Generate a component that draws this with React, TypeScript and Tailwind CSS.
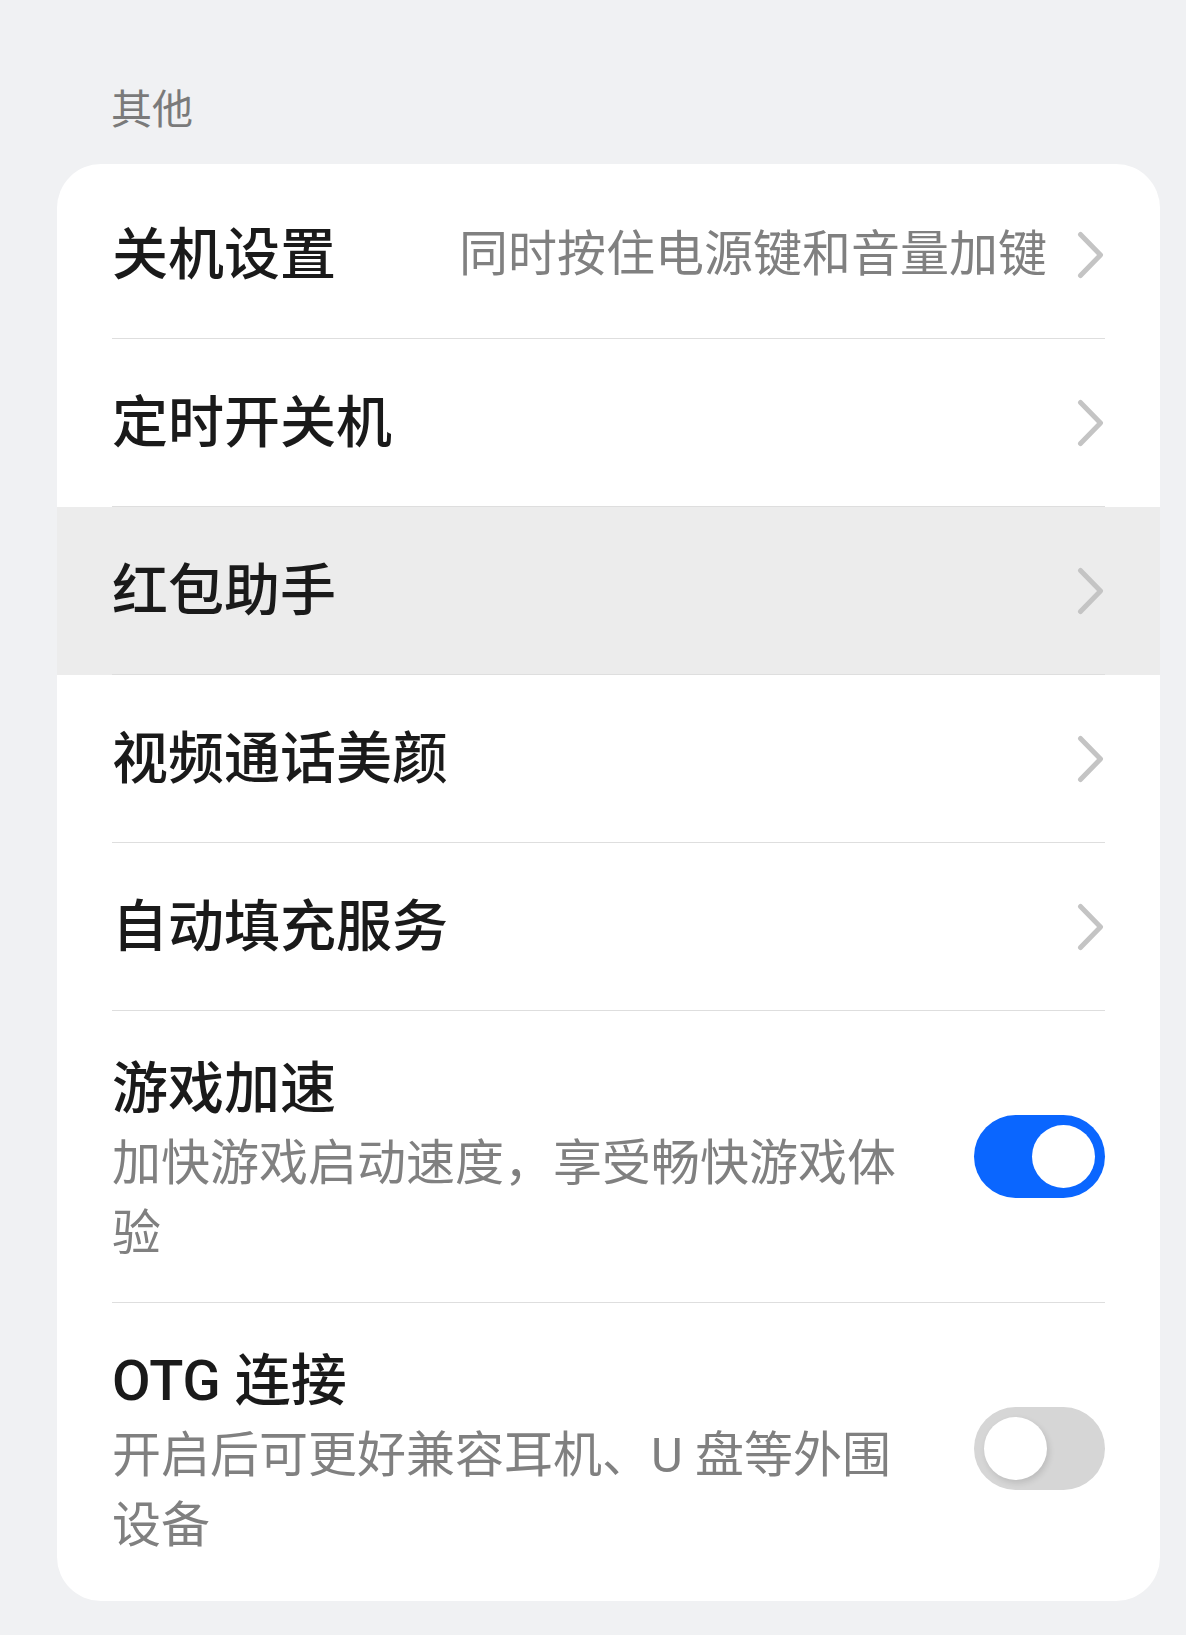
import React from "react";

type Row =
  | { kind: "link"; title: string; value?: string; pressed?: boolean }
  | { kind: "toggle"; title: string; desc: string; on: boolean };

const rows: Row[] = [
  { kind: "link", title: "关机设置", value: "同时按住电源键和音量加键" },
  { kind: "link", title: "定时开关机" },
  { kind: "link", title: "红包助手", pressed: true },
  { kind: "link", title: "视频通话美颜" },
  { kind: "link", title: "自动填充服务" },
  { kind: "toggle", title: "游戏加速", desc: "加快游戏启动速度，享受畅快游戏体验", on: true },
  { kind: "toggle", title: "OTG 连接", desc: "开启后可更好兼容耳机、U 盘等外围设备", on: false },
];

function Chevron() {
  return (
    <svg width="28" height="48" viewBox="0 0 28 48" className="shrink-0">
      <polyline
        points="3.5,3.5 23.5,24 3.5,44.5"
        fill="none"
        stroke="#c4c4c4"
        strokeWidth="5"
        strokeLinecap="round"
        strokeLinejoin="round"
      />
    </svg>
  );
}

function Toggle({ on }: { on: boolean }) {
  return (
    <div
      className={`shrink-0 w-[131px] h-[83px] rounded-full flex items-center px-[10px] ${
        on ? "bg-[#0a66ff] justify-end" : "bg-[#d6d6d6] justify-start"
      }`}
    >
      <div
        className={`w-[63px] h-[63px] rounded-full bg-white ${
          on ? "" : "shadow-[2px_3px_6px_rgba(0,0,0,0.12)]"
        }`}
      />
    </div>
  );
}

export default function App() {
  return (
    <div
      className="min-h-[1635px] bg-[#f0f1f3] pt-[82px] pl-[57px] pr-[26px] pb-[38px]"
      style={{ fontFamily: 'Roboto, "Noto Sans CJK SC", sans-serif' }}
    >
      <h2 className="pl-[54px] text-[41px] leading-[56px] text-[#7a7a7a] font-normal">其他</h2>

      <div className="mt-[26px] bg-white rounded-[44px] overflow-hidden py-[7px]">
        {rows.map((row, i) => {
          const last = i === rows.length - 1;
          if (row.kind === "link") {
            return (
              <div key={row.title} className={row.pressed ? "bg-[#ececec]" : ""}>
                <div
                  className={`mx-[55px] h-[168px] flex items-center justify-between ${
                    last ? "" : "border-b border-[#dedede]"
                  }`}
                >
                  <span className="text-[56px] leading-[72px] font-medium text-[#1a1a1a]">
                    {row.title}
                  </span>
                  <div className="flex items-center gap-[30px]">
                    {row.value && (
                      <span className="text-[49px] leading-[70px] text-[#808080]">
                        {row.value}
                      </span>
                    )}
                    <Chevron />
                  </div>
                </div>
              </div>
            );
          }
          return (
            <div key={row.title}>
              <div
                className={`mx-[55px] py-[33px] flex items-center gap-[70px] ${
                  last ? "" : "border-b border-[#dedede]"
                }`}
              >
                <div className="flex-1 pt-[9px]">
                  <div className="text-[56px] leading-[72px] font-medium text-[#1a1a1a]">
                    {row.title}
                  </div>
                  <div className="mt-[4px] text-[49px] leading-[70px] text-[#808080]">
                    {row.desc}
                  </div>
                </div>
                <Toggle on={row.on} />
              </div>
            </div>
          );
        })}
      </div>
    </div>
  );
}
